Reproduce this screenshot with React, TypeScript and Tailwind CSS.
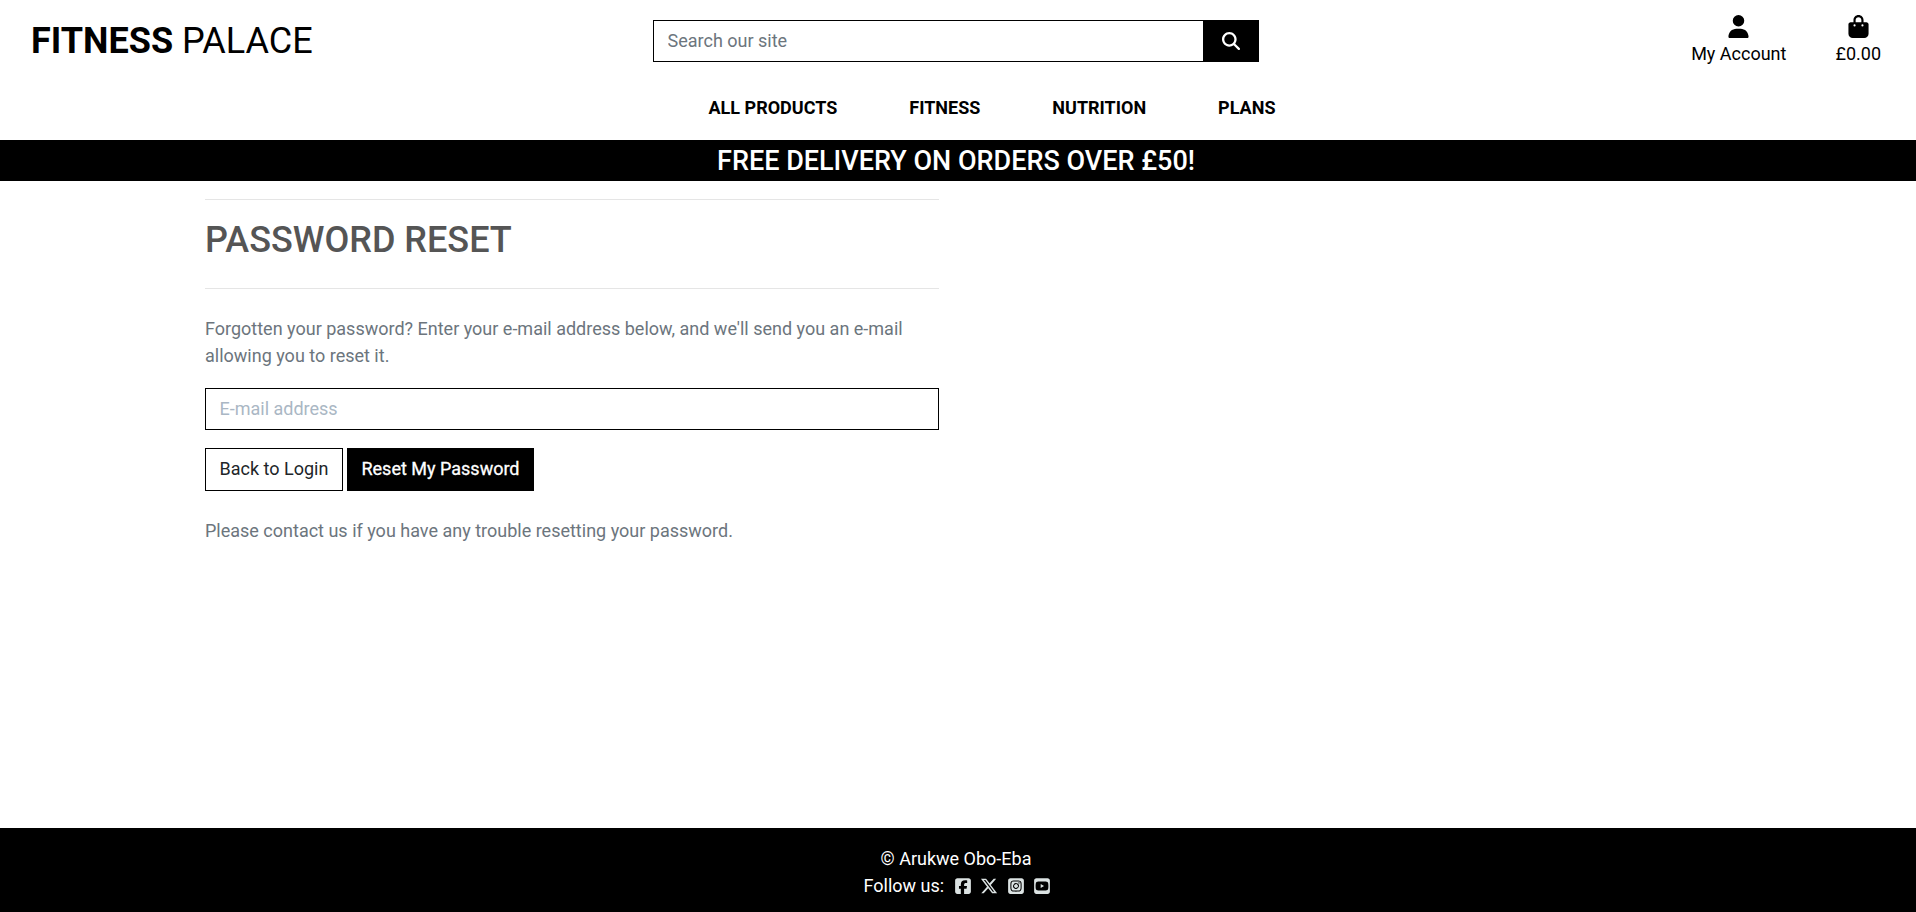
import React from "react";
import {
  FaBagShopping,
  FaMagnifyingGlass,
  FaSquareFacebook,
  FaSquareInstagram,
  FaSquareYoutube,
  FaUser,
  FaXTwitter,
} from "react-icons/fa6";

const navItems = ["All Products", "Fitness", "Nutrition", "Plans"];

const socials = [
  { name: "Facebook", Icon: FaSquareFacebook },
  { name: "X", Icon: FaXTwitter },
  { name: "Instagram", Icon: FaSquareInstagram },
  { name: "YouTube", Icon: FaSquareYoutube },
];

function Header() {
  return (
    <header className="h-[140px] text-black">
      <div className="grid h-[81px] grid-cols-[653px_606px_1fr] items-start">
        <a href="#" className="pt-[14px] pl-[31px] text-[36px] leading-[54px]">
          <strong className="font-bold">FITNESS</strong> PALACE
        </a>
        <form className="mt-5 flex h-[42px] border border-black">
          <input
            type="text"
            placeholder="Search our site"
            className="min-w-0 flex-1 px-[13.5px] pb-[2px] outline-none placeholder:text-[#6c757d]"
          />
          <button type="button" aria-label="Search" className="flex w-[55px] items-center justify-center bg-black pl-[1px] text-white">
            <FaMagnifyingGlass className="size-[18px]" />
          </button>
        </form>
        <div className="flex justify-end gap-[49px] pt-[15px] pr-[35px]">
          <a href="#" className="flex flex-col items-center">
            <FaUser className="h-[23px] w-auto" />
            <span className="mt-[2px] leading-[27px]">My Account</span>
          </a>
          <a href="#" className="flex flex-col items-center">
            <FaBagShopping className="h-[23px] w-auto" />
            <span className="mt-[2px] leading-[27px]">£0.00</span>
          </a>
        </div>
      </div>
      <nav className="flex justify-center gap-[72px] pt-[13px] pl-[68px] font-bold uppercase leading-[27px]">
        {navItems.map((item) => (
          <a key={item} href="#">
            {item}
          </a>
        ))}
      </nav>
    </header>
  );
}

function PasswordReset() {
  return (
    <main className="flex-1 pt-[18px] pl-[205px]">
      <section className="w-[734px] text-[#6c757d]">
        <hr className="border-[#e5e5e5]" />
        <h2 className="mt-[19px] text-[36px] font-medium leading-[43px] text-[#555]">PASSWORD RESET</h2>
        <hr className="mt-[26px] border-[#e5e5e5]" />
        <p className="mt-[26px] leading-[27px]">
          Forgotten your password? Enter your e-mail address below, and we'll send you an e-mail allowing you to reset it.
        </p>
        <input
          type="email"
          placeholder="E-mail address"
          className="mt-[19px] block h-[42px] w-full border border-black px-[13.5px] pb-[2px] outline-none placeholder:text-[#aab7c4]"
        />
        <div className="mt-[18px] flex gap-1">
          <a href="#" className="flex h-[43px] w-[138px] items-center justify-center border border-black pb-[2px] text-[#212529]">
            Back to Login
          </a>
          <button type="button" className="h-[43px] w-[187px] bg-black pb-[2px] text-white [-webkit-text-stroke:0.3px_white]">
            Reset My Password
          </button>
        </div>
        <p className="mt-[26px] leading-[27px]">Please contact us if you have any trouble resetting your password.</p>
      </section>
    </main>
  );
}

function Footer() {
  return (
    <footer className="flex h-[84px] flex-col items-center bg-black pt-[17px] pr-1 leading-[27px] text-white">
      <p>© Arukwe Obo-Eba</p>
      <div className="ml-[3px] flex items-center">
        <span className="mr-[9.5px]">Follow us:</span>
        <div className="flex gap-[8.6px]">
          {socials.map(({ name, Icon }) => (
            <a key={name} href="#" aria-label={name} className="text-[#dce3e3]">
              <Icon className="size-[18px]" />
            </a>
          ))}
        </div>
      </div>
    </footer>
  );
}

export default function App() {
  return (
    <div className="flex h-screen flex-col bg-white font-[Roboto,sans-serif] text-[18px]">
      <Header />
      <div className="flex h-[41px] items-center justify-center bg-black pt-[2px] pr-1 text-[27px] font-medium leading-[41px] text-white">
        FREE DELIVERY ON ORDERS OVER £50!
      </div>
      <PasswordReset />
      <Footer />
    </div>
  );
}
